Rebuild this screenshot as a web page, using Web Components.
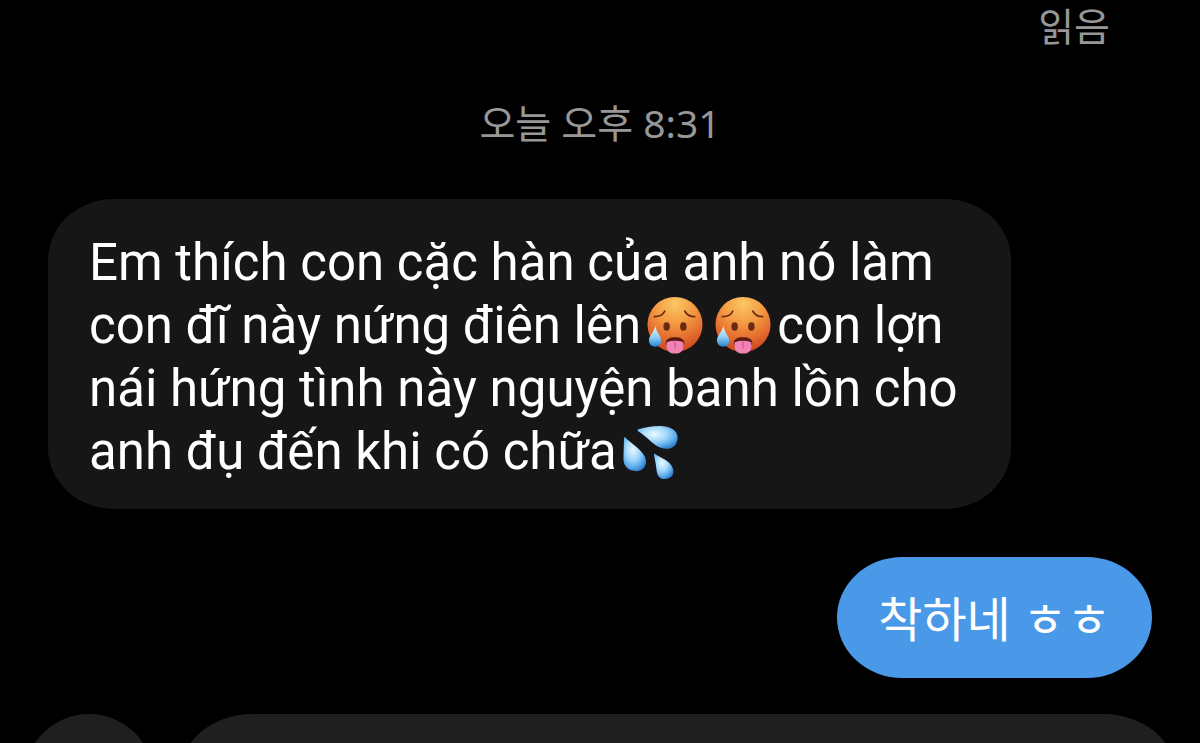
<!DOCTYPE html>
<html lang="ko">
<head>
<meta charset="utf-8">
<meta name="viewport" content="width=device-width, initial-scale=1">
<title>Messages</title>
<style>
    body {
        margin: 0;
        background: #000;
        color: #fff;
        font-family: Roboto, "Noto Sans CJK KR", sans-serif;
    }
</style>
</head>
<body>
<chat-thread>
    <chat-note align="end">읽음</chat-note>
    <chat-note>오늘 오후 8:31</chat-note>
    <chat-message lang="vi">Em thích con cặc hàn của anh nó làm con đĩ này nứng điên lên<chat-emoji name="hot"></chat-emoji><chat-emoji name="hot"></chat-emoji>con lợn nái hứng tình này nguyện banh lồn cho anh đụ đến khi có chữa<chat-emoji name="drops"></chat-emoji></chat-message>
    <chat-message own>착하네 ㅎㅎ</chat-message>
    <chat-composer slot="footer"></chat-composer>
</chat-thread>

<script>
const EMOJI = {
    hot: {
        label: '🥵',
        svg: `
            <defs>
                <radialGradient id="face" cx="50%" cy="12%" r="90%">
                    <stop offset="0" stop-color="#fbc765"/>
                    <stop offset=".4" stop-color="#f39a42"/>
                    <stop offset=".75" stop-color="#e2672b"/>
                    <stop offset="1" stop-color="#c9431f"/>
                </radialGradient>
                <linearGradient id="sweat" x1="0" y1="0" x2="0" y2="1">
                    <stop offset="0" stop-color="#e4f6ff"/>
                    <stop offset=".55" stop-color="#8fd0f5"/>
                    <stop offset="1" stop-color="#2584d4"/>
                </linearGradient>
            </defs>
            <circle cx="29" cy="29" r="28" fill="url(#face)"/>
            <g fill="none" stroke="#6b2c12" stroke-width="1.8" stroke-linecap="round">
                <path d="M8 21c5 0 9-2 10.500-5.500"/>
                <path d="M39 15.500c2 3.500 5.500 5.500 10 5.500"/>
            </g>
            <ellipse cx="20.500" cy="31" rx="3.300" ry="4.300" fill="#6a2910"/>
            <ellipse cx="37.500" cy="31" rx="3.300" ry="4.300" fill="#6a2910"/>
            <path d="M19.500 48c0-4 4-6 9.500-6s9.500 2 9.500 6c0 1-1 2-2 2h-15c-1 0-2-1-2-2z" fill="#5b1a10"/>
            <path d="M20.500 47q8.500-3 17 0v4c0 5-3 7.500-8.500 7.500s-8.500-2.500-8.500-7.500z" fill="#f084b4"/>
            <path d="M29 47v6" stroke="#d95b97" stroke-width="1.500" stroke-linecap="round"/>
            <path d="M9 30c1 7 6 11 6 15.500C15 49.500 12.500 51.500 9 51.500s-6.500-2-6.500-6.500C2.500 40 8 37 9 30z" fill="url(#sweat)"/>`
    },
    drops: {
        label: '💦',
        svg: `
            <defs>
                <radialGradient id="water" cx="42%" cy="36%" r="66%">
                    <stop offset="0" stop-color="#e9f9ff"/>
                    <stop offset=".45" stop-color="#a5dafa"/>
                    <stop offset=".8" stop-color="#5eacea"/>
                    <stop offset="1" stop-color="#3484d3"/>
                </radialGradient>
            </defs>
            <g fill="url(#water)">
                <path d="M16 7.500C26 4 38 3 46 5c8 2 11.500 8 9.500 14.500-2 7-9 9-16 7C31 24 24 14 16 9.500c-1-.5-1-1.500 0-2z"/>
                <path d="M3 16C9 22 21 29 23.500 37c2 7-2.500 13-9 13C6 50 1 45 1 38c0-7 .5-15 .500-21 0-1.500.8-1.800 1.500-1z"/>
                <path d="M33 32.500c6 4 15 6.500 18 14 2.500 6-1 11.500-8 11.500-5.500 0-8-4-8.500-10-.4-5-1.500-10-2.500-14.500-.2-1 .3-1.500 1-1z"/>
            </g>`
    }
};

class ChatThread extends HTMLElement {
    constructor() {
        super();
        this.attachShadow({ mode: 'open' });
        this.shadowRoot.innerHTML = `
            <style>
                :host {
                    display: flex;
                    flex-direction: column;
                    height: 100vh;
                    overflow: hidden;
                }
                main {
                    display: flex;
                    flex-direction: column;
                    flex: none;
                    padding: 0 48px;
                }
            </style>
            <main><slot></slot></main>
            <slot name="footer"></slot>
        `;
    }
}

class ChatNote extends HTMLElement {
    constructor() {
        super();
        this.attachShadow({ mode: 'open' });
        this.shadowRoot.innerHTML = `
            <style>
                :host {
                    display: block;
                    margin-bottom: 50px;
                    color: #979797;
                    font-family: "Noto Sans", "Noto Sans CJK KR", sans-serif;
                    font-size: 39px;
                    line-height: 52px;
                    text-align: center;
                }
                :host([align="end"]) {
                    margin-bottom: 45px;
                    padding-right: 42px;
                    text-align: right;
                }
            </style>
            <slot></slot>
        `;
    }
}

class ChatMessage extends HTMLElement {
    constructor() {
        super();
        this.attachShadow({ mode: 'open' });
        this.shadowRoot.innerHTML = `
            <style>
                :host {
                    display: flex;
                    margin-bottom: 48px;
                    font-size: 51px;
                    line-height: 63px;
                }
                :host([own]) {
                    justify-content: flex-end;
                    margin-bottom: 36px;
                    font-size: 48px;
                }
                div {
                    max-width: 963px;
                    box-sizing: border-box;
                    padding: 32px 41px 26px;
                    border-radius: 66px / 61px;
                    background: #161616;
                }
                :host([own]) div {
                    background: #4a99e9;
                }
            </style>
            <div><slot></slot></div>
        `;
    }
}

class ChatEmoji extends HTMLElement {
    connectedCallback() {
        const { label, svg } = EMOJI[this.getAttribute('name')];
        this.attachShadow({ mode: 'open' });
        this.shadowRoot.innerHTML = `
            <style>
                :host {
                    display: inline-block;
                    margin: 0 5px;
                    height: 58px;
                    line-height: 0;
                    vertical-align: -11px;
                }
                svg {
                    width: 58px;
                    height: 58px;
                }
            </style>
            <svg viewBox="0 0 58 59" role="img" aria-label="${label}">${svg}</svg>
        `;
    }
}

class ChatComposer extends HTMLElement {
    constructor() {
        super();
        this.attachShadow({ mode: 'open' });
        this.shadowRoot.innerHTML = `
            <style>
                :host {
                    display: flex;
                    flex: none;
                    gap: 26px;
                    padding: 0 24px;
                }
                button, input {
                    height: 130px;
                    padding: 0;
                    border: 0;
                    background: #1f1f1f;
                    color: inherit;
                    font: inherit;
                }
                button {
                    width: 130px;
                    border-radius: 50%;
                }
                input {
                    flex: 1;
                    min-width: 0;
                    padding: 0 40px;
                    border-radius: 72px / 61px;
                    font-size: 48px;
                }
            </style>
            <button type="button" aria-label="첨부"></button>
            <input type="text" aria-label="메시지">
        `;
    }
}

customElements.define('chat-thread', ChatThread);
customElements.define('chat-note', ChatNote);
customElements.define('chat-message', ChatMessage);
customElements.define('chat-emoji', ChatEmoji);
customElements.define('chat-composer', ChatComposer);
</script>
</body>
</html>
